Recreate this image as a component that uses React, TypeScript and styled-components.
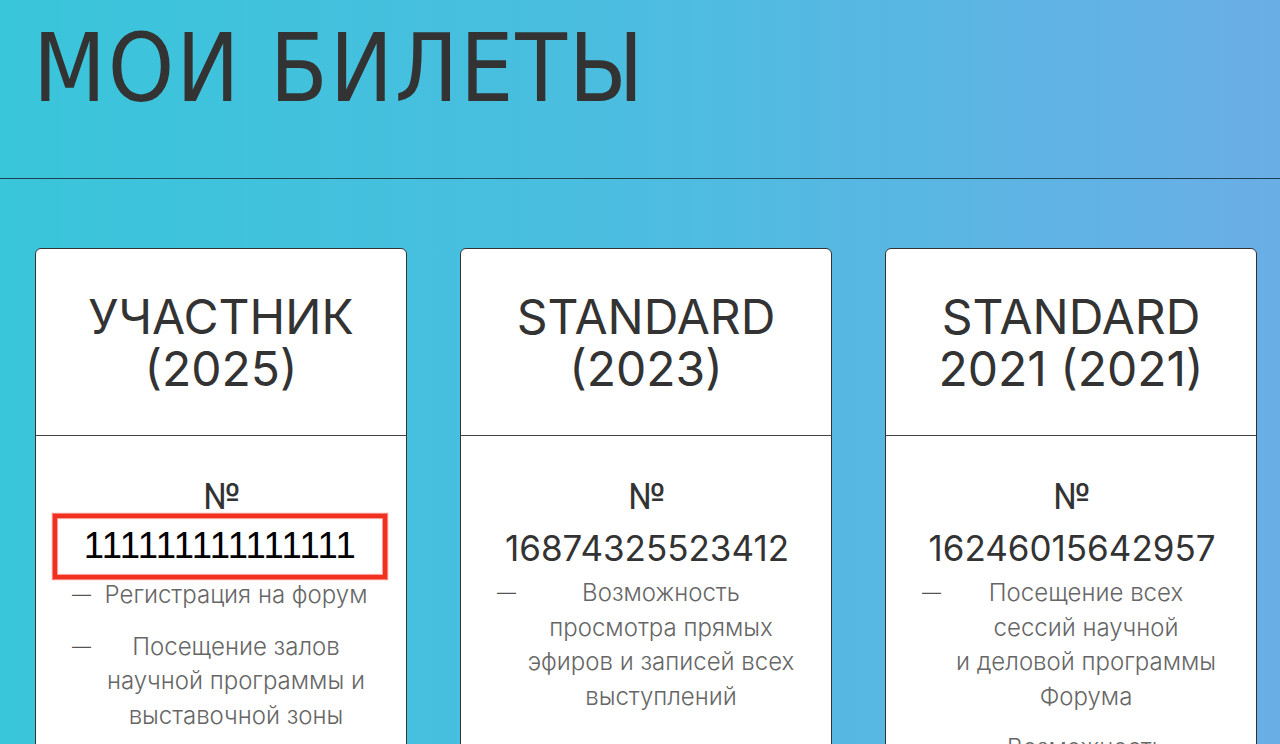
import React from "react";
import styled, { createGlobalStyle } from "styled-components";

const Global = createGlobalStyle`
  html, body { margin: 0; padding: 0; height: 100%; }
  body {
    overflow: hidden;
    background: linear-gradient(90deg, #39c5da 0%, #4cbde0 50%, #6aaee6 100%);
    min-height: 744px;
  }
  #root { min-height: 744px; }
`;

const Page = styled.div`
  width: 1280px;
  height: 744px;
  overflow: hidden;
  background: linear-gradient(90deg, #39c5da 0%, #4cbde0 50%, #6aaee6 100%);
  display: flex;
  flex-direction: column;
`;

const Header = styled.header`
  flex-shrink: 0;
  height: 179px;
  border-bottom: 1px solid #1f3f4c;
  padding: 14px 0 0 33px;
  box-sizing: border-box;
`;

const Title = styled.h1`
  margin: 0;
  font-family: "DejaVu Sans Condensed", "DejaVu Sans", sans-serif;
  font-weight: 400;
  font-size: 94px;
  line-height: 110px;
  color: #333;
  letter-spacing: 1.8px;
`;

const Cards = styled.div`
  flex-shrink: 0;
  display: grid;
  grid-template-columns: repeat(3, 372px);
  column-gap: 53px;
  padding: 69px 0 0 35px;
`;

const Card = styled.section`
  background: #fff;
  border: 1px solid #333;
  border-radius: 6px;
  height: 560px;
  font-family: "Inter", "Roboto", sans-serif;
  color: #333;
`;

const CardHead = styled.div`
  height: 187px;
  border-bottom: 1px solid #444;
  display: flex;
  align-items: center;
  justify-content: center;
  text-align: center;
  padding-top: 2px;
  box-sizing: border-box;
`;

const CardTitle = styled.h2`
  margin: 0;
  font-weight: 400;
  font-size: 48px;
  line-height: 52px;
  color: #333;
`;

const CardBody = styled.div`
  padding: 34px 34px 0 36px;
  display: flex;
  flex-direction: column;
  align-items: center;
`;

const NumLabel = styled.div`
  font-size: 35px;
  line-height: 52px;
  text-align: center;
`;

const Number = styled.div<{ $marked?: boolean }>`
  font-size: ${(p) => (p.$marked ? "36.5px" : "35px")};
  line-height: 52px;
  text-align: center;
  font-family: ${(p) => (p.$marked ? '"Liberation Sans", Arial, sans-serif' : "inherit")};
  color: ${(p) => (p.$marked ? "#000" : "#333")};
  letter-spacing: ${(p) => (p.$marked ? "0.4px" : "0")};
  margin-bottom: 2px;
`;

const Marked = styled.div`
  border: 4px solid #f2301f;
  box-shadow: 0 0 1px 1px rgba(242, 48, 31, 0.6), inset 0 0 1px 1px rgba(242, 48, 31, 0.5);
  width: 334px;
  height: 65px;
  box-sizing: border-box;
  display: flex;
  align-items: center;
  justify-content: center;
  margin: 0 -15px -9px -19px;
  position: relative;
  top: -8px;
`;

const List = styled.ul`
  list-style: none;
  margin: 0;
  padding: 0;
  width: 100%;
  display: flex;
  flex-direction: column;
  gap: 17px;
`;

const Item = styled.li`
  display: grid;
  grid-template-columns: 20px 1fr;
  column-gap: 8px;
  font-size: 24px;
  line-height: 34.5px;
  color: #666;
  font-weight: 300;
`;

const Dash = styled.span`
  color: #555;
  font-size: 19px;
`;

const ItemText = styled.span`
  text-align: center;
`;

type Ticket = {
  title: React.ReactNode;
  number: string;
  marked?: boolean;
  items: React.ReactNode[];
};

const tickets: Ticket[] = [
  {
    title: (
      <>
        УЧАСТНИК
        <br />
        (2025)
      </>
    ),
    number: "111111111111111",
    marked: true,
    items: [
      "Регистрация на форум",
      <>
        Посещение залов
        <br />
        научной программы и
        <br />
        выставочной зоны
      </>,
    ],
  },
  {
    title: (
      <>
        STANDARD
        <br />
        (2023)
      </>
    ),
    number: "16874325523412",
    items: [
      <>
        Возможность
        <br />
        просмотра прямых
        <br />
        эфиров и записей всех
        <br />
        выступлений
      </>,
    ],
  },
  {
    title: (
      <>
        STANDARD
        <br />
        2021 (2021)
      </>
    ),
    number: "16246015642957",
    items: [
      <>
        Посещение всех
        <br />
        сессий научной
        <br />
        и деловой программы
        <br />
        Форума
      </>,
      <>Возможность</>,
    ],
  },
];

export default function App() {
  return (
    <Page>
      <Global />
      <Header>
        <Title>МОИ БИЛЕТЫ</Title>
      </Header>
      <Cards>
        {tickets.map((t, i) => (
          <Card key={i}>
            <CardHead>
              <CardTitle>{t.title}</CardTitle>
            </CardHead>
            <CardBody>
              <NumLabel>№</NumLabel>
              {t.marked ? (
                <Marked>
                  <Number $marked>{t.number}</Number>
                </Marked>
              ) : (
                <Number>{t.number}</Number>
              )}
              <List>
                {t.items.map((it, j) => (
                  <Item key={j}>
                    <Dash>—</Dash>
                    <ItemText>{it}</ItemText>
                  </Item>
                ))}
              </List>
            </CardBody>
          </Card>
        ))}
      </Cards>
    </Page>
  );
}
